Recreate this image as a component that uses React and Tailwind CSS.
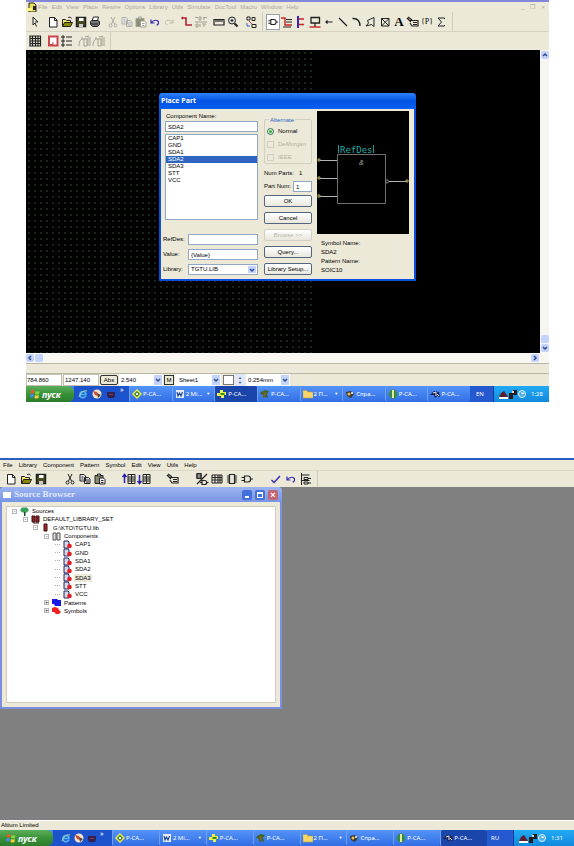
import React, { useState } from "react";

const parts = ["CAP1", "GND", "SDA1", "SDA2", "SDA3", "STT", "VCC"];

// Drawings shared by both toolbars, on a 14x14 grid
const drawings = {
  pointer: <path d="M5 2v8l2-2 1.5 3.5M5 2l5 5H7" />,
  file: <path d="M3.5 2.5h5l2.500 2.500v7h-7.500zM8.500 2.500v3h2.500" fill="#fff" />,
  open: (
    <>
      <path d="M2.500 11.500v-7h3l1 1h4v2" fill="#f3e66a" />
      <path d="M2.500 11.500l2-4h8l-2 4z" fill="#8a8a00" />
      <path d="M8 3c1-1.500 3-1 3.500.5" />
    </>
  ),
  save: (
    <>
      <path d="M2.500 2.500h9v9h-9z" fill="#4a4a20" strokeWidth="1.500" />
      <path d="M5 3h4.500v3H5z" fill="#fff" stroke="none" />
      <path d="M5 9h4v3H5z" fill="#ccc" stroke="none" />
    </>
  ),
  print: (
    <>
      <path d="M4 6l1.500-4h5L9.500 6" fill="#fff" />
      <path d="M2.500 6.500l1-1h6l2 1v3l-2 2h-5l-2-2z" fill="#777" />
      <path d="M3 9h7" />
    </>
  ),
  cut: (
    <>
      <path d="M5 2l3.500 7M9 2L5.500 9" />
      <circle cx="4.500" cy="10.500" r="1.500" />
      <circle cx="9.500" cy="10.500" r="1.500" />
    </>
  ),
  copy: (
    <path d="M2 2.500h4l1.500 1.500v5H2zM6.500 5.500h4L12 7v4.500H6.500zM3.500 5h2M3.500 7h2M8 8h3M8 10h3" fill="#e6e6ee" />
  ),
  paste: (
    <>
      <path d="M2 3.500h8v8H2z" fill="#8c8a70" />
      <path d="M4.500 2h3v2h-3z" fill="#ddd" />
      <path d="M6.500 6h4l1.500 1.500V12H6.500zM8 8.500h2.500M8 10.500h2.500" fill="#fff" />
    </>
  ),
  undo: <path d="M3 4.500v3.500h3.500M3.500 7.500c2-3 7-3 7 0 0 1.500-1 2.500-2 2.500" strokeWidth="1.200" />,
  redo: <path d="M11 4.500v3.500H7.500M10.500 7.500c-2-3-7-3-7 0 0 1.500 1 2.500 2 2.500" />,
  route: <path d="M2 3h4v7h6M3 2l-1 1 1 1" strokeWidth="1.600" />,
  script: <path d="M1 2.500h3M5 2v3h2V2zM9 2.500h4M10 5V2M1 7h12M2 9v3h2V9zM6 9v3M8 9h4M10 9v3" />,
  measure: <path d="M2 4.500h10v5.500H2zM4 5v2M6 5v2M8 5v2M10 5v2" strokeWidth="1.200" />,
  zoom: (
    <>
      <circle cx="6" cy="5.500" r="3.500" fill="#ddd" />
      <path d="M8.500 8.500l3 3" strokeWidth="2" />
      <path d="M4.500 5.500h3M6 4v3" />
    </>
  ),
  swap: (
    <>
      <path d="M3 2h3v3H3zM8 9.500h4v3H8zM8 2.500h3v3H8z" />
      <path d="M5 6l3 3" stroke="#c33" />
      <path d="M3 8v3h3" stroke="#36c" />
    </>
  ),
  gate: <path d="M1.500 5.500h3M1.500 8.500h3M4.500 4H8c3.500 0 3.500 6 0 6H4.500zM10.500 7H13" strokeWidth="1.200" />,
  wire: (
    <>
      <path d="M1 3h4v7h7" stroke="#c22" strokeWidth="1.400" />
      <path d="M6 4.500h6M6 7h6M3 12h8" />
    </>
  ),
  bus: (
    <>
      <path d="M4 1v12" stroke="#3a25b5" strokeWidth="2" />
      <path d="M5 4h5M5 9.500h5" stroke="#c22" strokeWidth="1.400" />
    </>
  ),
  port: (
    <>
      <path d="M3 2.500h8.500v5.500H3zM7 8v4" strokeWidth="1.300" />
      <path d="M1.500 12h11" stroke="#c22" strokeWidth="1.400" />
    </>
  ),
  pin: <path d="M4 7h6.500M5.500 5.500L4 7l1.500 1.500" strokeWidth="1.200" />,
  line: <path d="M3 3l8 8" strokeWidth="1.300" />,
  arc: <path d="M2.500 3.500C8 3 10 7 10 11" strokeWidth="1.400" />,
  polygon: <path d="M2 11l2.500-3L3.500 5.500 10 2.500v9L7.500 9.500z" />,
  field: <path d="M3.500 3.500h7.500v7.500H3.500zM3.500 3.500l7.500 7.500M11 3.500L3.500 11" />,
  rename: <path d="M1 3l4 4M2 2l4 3M4.500 5.500H12v5.500H6L4 8M7 7.500h4M7 9.500h4" strokeWidth="1.200" />,
  sigma: <path d="M10.500 4V3H4l3.500 4L4 11h6.500v-1" />,
  grid: <path d="M2 2h10.500v10H2zM2 4.500h10.500M2 7h10.500M2 9.500h10.500M4.500 2v10M7.500 2v10M10 2v10" strokeWidth="1.200" />,
  sheet: (
    <>
      <path d="M3 2.500h8.500v9H3z" fill="#fff" stroke="#cc454b" strokeWidth="2" />
      <path d="M4 10.500h3V8" stroke="#cc454b" />
    </>
  ),
  list: <path d="M2 2h2v2H2zM2 6h2v2H2zM2 10h2v2H2zM6 3h6M6 7h6M6 11h6" />,
  sort: <path d="M1 12c0-4 1-6 3-7M3 4h2v2M6 5h3v7H6zM10 3v9M12 3v9M7 3l4-1" />,
  up: (
    <>
      <path d="M2.500 11V3M.5 5l2-2.500 2 2.500" stroke="#2a1fae" strokeWidth="1.500" />
      <path d="M6 2.500h7v9H6zM9.500 2.500v9M6 5h7M6 7h7M6 9h7" />
    </>
  ),
  down: (
    <>
      <path d="M2.500 3v8M.5 9l2 2.500 2-2.500" stroke="#2a1fae" strokeWidth="1.500" />
      <path d="M6 2.500h7v9H6zM9.500 2.500v9M6 5h7M6 7h7M6 9h7" />
    </>
  ),
  both: <path d="M2 1.500h4v5H2zM1 3h6M1 5h6M2 12L12 2M7 8.500h2.500c3 0 3 4 0 4H7zM5 10.500h2M12 10.500h1.500" strokeWidth="1.200" />,
  table: <path d="M2 3h10v8H2zM5 3v8M8 3v8M10 3v8M2 5.500h10M2 8h10" />,
  chip: <path d="M4.500 2.500h5v9h-5zM2 4h2M2 6h2M2 8h2M2 10h2M10 4h2M10 6h2M10 8h2M10 10h2" strokeWidth="1.200" />,
  check: <path d="M2.500 8l2.500 2.500L11 4" strokeWidth="1.400" />,
  tree: <path d="M2.500 1v12M2.500 3h8M5 5.500h4v2H5zM5 10h4v2H5zM9 6.500h3M9 11h3M2.500 8.500h8" />,
};

function Icon({ name, color = "#222" }) {
  return (
    <svg viewBox="0 0 14 14" className="size-3.5" fill="none" stroke={color} aria-hidden="true">
      {drawings[name]}
    </svg>
  );
}

function Tool({ name, color, wide, active }) {
  return (
    <button
      type="button"
      aria-label={name}
      className={`flex h-4 shrink-0 items-center justify-center ${wide ? "w-[15px]" : "w-3.5"} ${
        active ? "border border-gray-400 bg-white" : ""
      }`}
    >
      {name === "text" && <span className="font-['Liberation_Serif',serif] text-[13px] font-bold">A</span>}
      {name === "parameter" && <span className="font-['Liberation_Serif',serif] text-[8px]">{"{P}"}</span>}
      {drawings[name] && <Icon name={name} color={color} />}
    </button>
  );
}

function ToolGroup({ children }) {
  return <div className="flex items-center">{children}</div>;
}

function MenuBar({ items, className }) {
  return (
    <nav className={`flex items-center ${className}`}>
      {items.map((item) => (
        <button key={item} type="button">
          {item}
        </button>
      ))}
    </nav>
  );
}

function Chevron({ className = "" }) {
  return (
    <svg viewBox="0 0 8 8" className={`size-2 ${className}`} fill="none" stroke="#30508c" strokeWidth="1.500" aria-hidden="true">
      <path d="M2 3l2 2 2-2" />
    </svg>
  );
}

function Combo({ label, value, className }) {
  return (
    <div className={`relative flex bg-white ${className}`}>
      <select aria-label={label} className="w-full appearance-none pl-0.5 outline-none">
        <option>{value}</option>
      </select>
      <span className="pointer-events-none absolute inset-y-px right-px flex w-2 items-center bg-[#c3d3fb]">
        <Chevron />
      </span>
    </div>
  );
}

function TaskIcon({ kind }) {
  return (
    <svg viewBox="0 0 10 10" className="size-2.5 shrink-0" aria-hidden="true">
      {kind === "diamond" && (
        <>
          <path d="M5 0l5 5-5 5-5-5z" fill="#f2f03c" />
          <path d="M5 2l3 3-3 3-3-3z" fill="#186b3a" />
          <circle cx="5" cy="5" r="1.300" fill="#fff" />
        </>
      )}
      {kind === "word" && (
        <>
          <path d="M1 1h8v8H1z" fill="#e8edf8" />
          <path d="M2 3l1 4 1.500-3L6 7l1.500-4" fill="none" stroke="#234a9c" strokeWidth="1.200" />
        </>
      )}
      {kind === "cross" && (
        <>
          <path d="M3 1h3v2h3v3H7v3H4V7H0V4h3z" fill="#eef244" />
          <path d="M3.500 4h4v2h-4z" fill="#2f8a30" />
        </>
      )}
      {kind === "brush" && (
        <>
          <path d="M1 3l4-2 4 1-2 3 1 4-3-1-2 1V6L0 5z" fill="#3d6728" />
          <path d="M3 3l4 1-3 5z" fill="#7b6030" />
        </>
      )}
      {kind === "folder" && <path d="M0 1.500h4l1 1.500h5v6H0z" fill="#f7d568" stroke="#c9982d" strokeWidth=".5" />}
      {kind === "help" && (
        <>
          <path d="M1 3l5-1 3 3-3 4-4-2z" fill="#42382a" />
          <circle cx="4" cy="5" r="1.500" fill="#e5c25c" />
          <circle cx="7" cy="4" r="1" fill="#fff" />
        </>
      )}
      {kind === "library" && (
        <>
          <ellipse cx="5" cy="5" rx="4" ry="4.500" fill="#3a8b3d" />
          <path d="M4 1h2v8H4z" fill="#e3e9a8" />
        </>
      )}
      {kind === "tools" && (
        <>
          <path d="M0 6l4-4 5 1 1 5-3-1-2 2-1-3z" fill="#1b2354" />
          <path d="M3 4l3-1v4M7 5l2 2" stroke="#e8e8ee" fill="none" />
        </>
      )}
    </svg>
  );
}

const tasks = [
  { icon: "diamond", title: "P-CA..." },
  { icon: "word", title: "2 Mi...", group: true },
  { icon: "cross", title: "P-CA..." },
  { icon: "brush", title: "P-CA..." },
  { icon: "folder", title: "2 П...", group: true },
  { icon: "help", title: "Спра..." },
  { icon: "library", title: "P-CA..." },
  { icon: "tools", title: "P-CA..." },
];

function Taskbar({ active, language, time, wide }) {
  return (
    <footer className="flex h-4 items-stretch overflow-hidden bg-linear-to-b from-[#4b8bf5] via-[#2560df] to-[#1e50c4] font-['Noto_Sans',sans-serif] text-[6px] text-white">
      <button
        type="button"
        className={`flex items-center gap-0.5 rounded-r-md bg-linear-to-b from-[#5cae5a] via-[#389238] to-[#2d7c2c] text-[9px] leading-none font-bold italic ${
          wide ? "w-[53px] pl-1.5" : "w-12 pl-1"
        }`}
      >
        <svg viewBox="0 0 10 10" className="size-2.5" aria-hidden="true">
          <path d="M1 1.500q2-1 3.500 0L4 4.500Q2.500 3.500.5 4.500z" fill="#f0552b" />
          <path d="M5.500 2q2 1 4 0L9 5q-2 1-4 0z" fill="#8ad23d" />
          <path d="M.5 5.500q2-1 3.500 0l-.5 3q-2-1-3.500 0z" fill="#4a8bf0" />
          <path d="M5 6q2 1 4 0l-.5 3q-2 1-4 0z" fill="#f7d03b" />
        </svg>
        пуск
      </button>
      <div className={`flex items-center bg-[#1c52cb] ${wide ? "w-[59px] gap-[3px] pl-2" : "w-[55px] gap-1 pl-1"}`}>
        <svg viewBox="0 0 10 10" className="size-2.5" fill="none" aria-hidden="true">
          <path d="M2 5.500h6C8 1.500 2 1.500 2 5.500s4 4 6 1.500" stroke="#51b7f2" strokeWidth="1.500" />
          <path d="M1 8C2 4 6 1 9 2" stroke="#b0d8ae" />
        </svg>
        <svg viewBox="0 0 10 10" className="size-2.5" aria-hidden="true">
          <circle cx="5" cy="5" r="4.500" fill="#efe3c8" />
          <path d="M1 2l4 1 1 4-3-1z" fill="#cf4936" />
          <path d="M5 4l4 2-3 3z" fill="#584637" />
        </svg>
        <svg viewBox="0 0 10 10" className="size-2.5" aria-hidden="true">
          <path d="M1 3h8v3L8 9H2L1 6z" fill="#33204f" />
          <path d="M3 5h4v1H3z" fill="#8a3552" />
        </svg>
        <button type="button" aria-label="More" className="self-start text-[7px] leading-none">
          »
        </button>
      </div>
      <div className="flex min-w-0 flex-1">
        {tasks.map((task, i) => (
          <button
            key={i}
            type="button"
            className={`flex min-w-0 flex-1 items-center gap-px rounded-xs border-l border-[#6ea2f8] pl-0.5 whitespace-nowrap ${
              i === active ? "bg-[#1a46ab]" : "bg-linear-to-b from-[#5493f8] to-[#326ee5]"
            }`}
          >
            <TaskIcon kind={task.icon} />
            {task.title}
            {task.group && <span className="mr-1 ml-auto text-[4px]">▼</span>}
          </button>
        ))}
      </div>
      <div className={`flex items-center bg-[#2459cf] ${wide ? "w-[26px] pl-1" : "w-[23px] pl-1.5"}`}>{language}</div>
      <div className={`flex items-center gap-px border-l border-[#0d3f9a] bg-linear-to-b from-[#22aaf4] to-[#1289dd] pl-1 ${wide ? "w-[61px]" : "w-14"}`}>
        <svg viewBox="0 0 28 10" className="mr-1 h-2.5 w-7" aria-hidden="true">
          <path d="M1 8l2-4 3-2 2 3 2 3z" fill="#5c1f31" />
          <path d="M1 8h9v2H1z" fill="#fff" />
          <path d="M11 4h4V1h4v5h-4v4h-4z" fill="#231d1d" />
          <path d="M14 2h2v2h-2z" fill="#e2d9d9" />
          <circle cx="24" cy="5" r="3.500" fill="#4caee8" stroke="#dcf3fc" />
          <path d="M24 3v2l2-1" stroke="#fff" fill="none" />
        </svg>
        {time}
      </div>
    </footer>
  );
}

function DialogButton({ children, disabled }) {
  return (
    <button
      type="button"
      disabled={disabled}
      className="h-3 w-12 rounded-xs border border-[#52677f] bg-linear-to-b from-white to-[#e9e7dd] leading-none whitespace-nowrap disabled:border-[#d2d0c4] disabled:text-[#b5b3a6]"
    >
      {children}
    </button>
  );
}

function PartPreview() {
  return (
    <svg viewBox="0 0 92 123" className="h-[123px] w-[92px] bg-black" fill="none" aria-label="Part preview">
      <path d="M20.500 43.500h48v49h-48z" stroke="#707070" />
      <path d="M3 49.500h17M3 67.500h17M3 85.500h17M72 70.500h17" stroke="#b5b5b5" />
      <path d="M1 48h2v2H1zM1 66h2v2H1zM1 84h2v2H1zM89 69h2v2h-2z" stroke="#b8ac60" />
      <circle cx="70" cy="70.500" r="1.500" stroke="#888" />
      <path d="M21.500 34v8M56.500 34v8" stroke="#209b98" />
      <text x="23" y="42" fill="#24aaa6" fontSize="9" fontFamily="DejaVu Sans Mono, monospace">
        RefDes
      </text>
      <text x="42" y="54" fill="#aaa" fontSize="7" fontStyle="italic" fontFamily="Liberation Sans, sans-serif">
        &amp;
      </text>
    </svg>
  );
}

function PlacePartDialog() {
  const [selected, setSelected] = useState("SDA2");
  const field = "h-[11px] min-w-0 border border-[#90a8c4] bg-white px-0.5 outline-none";

  return (
    <section
      role="dialog"
      aria-label="Place Part"
      className="absolute top-[43px] left-[133px] w-[257px] rounded-t border-2 border-t-0 border-[#0b4fe0] bg-[#ece9d8]"
    >
      <h2 className="-mx-0.5 flex h-4 items-center rounded-t bg-linear-to-b from-[#2b83f8] via-[#0453e3] to-[#0560f2] pl-0.5 font-['Open_Sans',sans-serif] text-[7px] font-bold text-white">
        Place Part
      </h2>
      <div className="flex gap-1.5 px-0.5 pt-0.5">
        <div className="w-[95px]">
          <label htmlFor="component" className="ml-0.5 block h-2.5 pl-px leading-[10px]">
            Component Name:
          </label>
          <input
            id="component"
            value={selected}
            onChange={(e) => setSelected(e.target.value)}
            className={`${field} ml-0.5 w-[93px]`}
          />
          <ul className="mt-0.5 ml-0.5 h-[86px] border border-[#90a8c4] bg-white">
            {parts.map((part) => (
              <li key={part}>
                <button
                  type="button"
                  onClick={() => setSelected(part)}
                  className={`block h-[7px] w-full pl-0.5 text-left leading-[7px] ${
                    part === selected ? "bg-[#2f65c0] text-white" : ""
                  }`}
                >
                  {part}
                </button>
              </li>
            ))}
          </ul>
          <div className="mt-3.5 flex flex-col gap-1 pb-1">
            <div className="flex items-center">
              <label htmlFor="refdes" className="w-[25px]">
                RefDes:
              </label>
              <input id="refdes" defaultValue="" className={`${field} flex-1`} />
            </div>
            <div className="flex items-center">
              <label htmlFor="value" className="w-[25px]">
                Value:
              </label>
              <input id="value" defaultValue="{Value}" className={`${field} flex-1`} />
            </div>
            <div className="flex items-center">
              <span className="w-[25px]">Library:</span>
              <Combo label="Library" value="TGTU.LIB" className="h-[11px] flex-1 border border-[#90a8c4]" />
            </div>
          </div>
        </div>

        <div className="flex w-12 flex-col pt-2">
          <fieldset className="relative flex h-[45px] flex-col gap-1 rounded-xs border border-[#d0d0bf] pt-[7px] pl-0.5">
            <legend className="absolute -top-1 left-1 bg-[#ece9d8] px-px leading-2 text-[#2464c8]">Alternate</legend>
            {["Normal", "DeMorgan", "IEEE"].map((name, i) => (
              <label key={name} className={`flex h-[9px] items-center gap-1 ${i > 0 ? "text-[#b5b3a6]" : ""}`}>
                <input
                  type="radio"
                  name="alternate"
                  defaultChecked={i === 0}
                  disabled={i > 0}
                  className="size-[7px] appearance-none rounded-full border border-[#457c68] bg-white checked:bg-[#36a838] checked:shadow-[inset_0_0_0_1px_white] disabled:rounded-none disabled:border-[#d2d0c4] disabled:bg-transparent"
                />
                {name}
              </label>
            ))}
          </fieldset>
          <p className="mt-1 flex h-2.5 items-center whitespace-pre">Num Parts:   1</p>
          <div className="my-[3px] flex items-center justify-between">
            <label htmlFor="partnum" className="whitespace-nowrap">
              Part Num:
            </label>
            <input id="partnum" defaultValue="1" className={`${field} w-[19px]`} />
          </div>
          <div className="flex flex-col gap-[5px]">
            <DialogButton>OK</DialogButton>
            <DialogButton>Cancel</DialogButton>
            <DialogButton disabled>Browse &gt;&gt;</DialogButton>
            <DialogButton>Query...</DialogButton>
            <DialogButton>Library Setup...</DialogButton>
          </div>
        </div>

        <div className="-ml-px">
          <PartPreview />
          <dl className="mt-[5px] pl-1 leading-[9px]">
            <dt>Symbol Name:</dt>
            <dd>SDA2</dd>
            <dt>Pattern Name:</dt>
            <dd>SOIC10</dd>
          </dl>
        </div>
      </div>
    </section>
  );
}

function ScrollButton({ className = "" }) {
  return (
    <button type="button" aria-label="Scroll" className="flex size-2 items-center justify-center rounded-xs bg-[#c3d3fb]">
      <Chevron className={className} />
    </button>
  );
}

function SchematicWindow() {
  return (
    <section className="ml-[26px] mr-[25px] border-t-2 border-[#8286d8] bg-[#ece9d8]">
      <header className="flex h-2.5 items-center text-[#aaa89a]">
        <svg viewBox="0 0 10 10" className="mr-px ml-px size-2.5" aria-hidden="true">
          <path d="M2 1h5l2 2v7H2z" fill="#e8df55" stroke="#222" />
          <path d="M0 6h5v3H0z" fill="#fff37a" />
          <path d="M6 4h3v4H6z" fill="#222" />
        </svg>
        <MenuBar
          className="gap-1"
          items={["File", "Edit", "View", "Place", "Rewire", "Options", "Library", "Utils", "Simulate", "DocTool", "Macro", "Window", "Help"]}
        />
        <div className="mr-1 ml-auto flex gap-1.5">
          <button type="button" aria-label="Minimize">_</button>
          <button type="button" aria-label="Restore">❐</button>
          <button type="button" aria-label="Close">×</button>
        </div>
      </header>

      <div className="flex h-5 items-center border-b border-[#d4d1c0] pl-0.5">
        <div className="flex items-center gap-1">
          <Tool name="pointer" />
          <ToolGroup>
            <Tool name="file" />
            <Tool name="open" />
            <Tool name="save" />
            <Tool name="print" />
          </ToolGroup>
          <ToolGroup>
            <Tool name="cut" color="#b0aea2" />
            <Tool name="copy" color="#b0aea2" />
            <Tool name="paste" color="#a3a195" />
            <Tool name="undo" color="#3029b4" />
            <Tool name="redo" color="#bbb9ad" />
          </ToolGroup>
          <ToolGroup>
            <Tool name="route" color="#b02538" />
            <Tool name="script" color="#a3a195" />
          </ToolGroup>
          <ToolGroup>
            <Tool name="measure" />
            <Tool name="zoom" />
          </ToolGroup>
          <Tool name="swap" />
        </div>
        <div className="ml-1 flex h-full items-center border-x border-[#cfccbb] pr-1 pl-[3px]">
          <Tool name="gate" active />
          <Tool name="wire" />
          <Tool name="bus" />
          <Tool name="port" />
          <Tool name="pin" />
          <Tool name="line" />
          <Tool name="arc" />
          <Tool name="polygon" />
          <Tool name="field" />
          <Tool name="text" />
          <Tool name="rename" />
          <Tool name="parameter" />
          <Tool name="sigma" />
        </div>
      </div>
      <div className="flex h-[18px] items-center pl-0.5">
        <div className="flex h-full items-center gap-1 border-r border-[#cfccbb] pr-1">
          <Tool name="grid" />
          <ToolGroup>
            <Tool name="sheet" />
            <Tool name="list" />
          </ToolGroup>
          <ToolGroup>
            <Tool name="sort" color="#a3a195" />
            <Tool name="sort" color="#a3a195" />
          </ToolGroup>
        </div>
      </div>

      <div className="flex h-[303px]">
        <div className="relative flex-1 bg-black">
          <div className="h-full w-[290px] bg-[radial-gradient(circle_at_3px_3px,#16261d_1px,transparent_1px)] bg-size-[6px_6px]" />
          <PlacePartDialog />
        </div>
        <div className="flex w-[9px] flex-col items-center justify-between bg-[#f6f5f0] py-px">
          <ScrollButton className="rotate-180" />
          <div className="flex flex-col gap-px">
            <div className="size-2 rounded-xs bg-[#c3d3fb]" />
            <ScrollButton />
          </div>
        </div>
      </div>
      <div className="flex h-2.5 items-center bg-[#f8f7f2] pr-2.5">
        <ScrollButton className="rotate-90" />
        <div className="ml-px h-2 w-2 rounded-xs bg-[#c3d3fb]" />
        <div className="ml-auto">
          <ScrollButton className="-rotate-90" />
        </div>
      </div>
      <div className="h-[11px] border-y border-[#b9b6a5]" />
      <div className="flex h-3 items-stretch gap-px">
        <output className="flex w-9 items-center border border-[#c4c1b0] bg-white">784.860</output>
        <output className="flex w-9 items-center border border-[#c4c1b0] bg-white pl-px">1247.140</output>
        <button type="button" className="my-px w-[18px] rounded-xs border border-[#333] leading-none">Abs</button>
        <Combo label="Grid" value="2.540" className="w-11" />
        <button type="button" className="my-px w-2.5 border border-[#333] leading-none">M</button>
        <Combo label="Sheet" value="Sheet1" className="w-[46px] pl-0.5" />
        <input aria-label="Layer" className="my-px ml-px w-[11px] border border-[#777] bg-white" />
        <div className="flex w-2.5 flex-col items-center justify-center bg-[#e0e7fa] text-[4px] leading-[5px] text-[#30508c]">
          <button type="button">▲</button>
          <button type="button">▼</button>
        </div>
        <Combo label="Line width" value="0.254mm" className="w-11" />
      </div>
      <Taskbar active={2} language="EN" time="1:28" />
    </section>
  );
}

function TreeIcon({ kind }) {
  return (
    <svg viewBox="0 0 9 9" className="size-[9px] shrink-0" aria-hidden="true">
      {kind === "sources" && (
        <>
          <path d="M0 3l2-2.500h5L9 3 7 5.500H2z" fill="#35a259" />
          <path d="M4 5h1.500v4H4z" fill="#174b29" />
        </>
      )}
      {kind === "set" && <path d="M1 1h3v6H1zM5 1h3v6H5zM2 8h6" fill="#8a2222" stroke="#401010" />}
      {kind === "lib" && <path d="M3 1h3v7H3z" fill="#a92a2a" stroke="#351010" />}
      {kind === "components" && <path d="M1 1h3v7H1zM5 1h3v7H5z" fill="#e4e4e4" stroke="#555" />}
      {kind === "part" && (
        <>
          <path d="M1 1h4l1 1v6H1z" fill="#d7d7e6" stroke="#222760" />
          <circle cx="6.500" cy="6" r="2.300" fill="#e01b22" />
        </>
      )}
      {kind === "patterns" && <path d="M0 1h5l1 1h3v6H3L2 6H0z" fill="#1717e8" />}
      {kind === "symbols" && <path d="M0 2l3-1 3 1 1 2 2 2-2 2H4L2 6H0z" fill="#ef2020" />}
    </svg>
  );
}

function TreeRow({ kind, label, className, toggle, selected }) {
  return (
    <li className={`flex min-h-0 items-center gap-0.5 ${className}`}>
      {toggle ? (
        <button type="button" aria-label={`Toggle ${label}`} className="mr-px flex size-[5px] items-center justify-center border border-[#b5b5b5] text-[5px] leading-none">
          {toggle}
        </button>
      ) : (
        <span className="mr-px w-[5px] border-t border-dotted border-[#aaa]" />
      )}
      <TreeIcon kind={kind} />
      <span className={`px-px leading-2 ${selected ? "bg-[#ece9d8]" : ""}`}>{label}</span>
    </li>
  );
}

function SourceBrowser() {
  return (
    <section className="absolute top-0 left-0 w-[282px] rounded-t border-2 border-t-0 border-[#7b8ee0] bg-[#ece9d8]">
      <header className="-mx-0.5 flex h-[15px] items-center rounded-t bg-linear-to-b from-[#9db4f0] to-[#7895e6] pr-1 pl-[3px]">
        <span className="h-1.5 w-2 bg-white" />
        <h2 className="ml-[3px] font-['Liberation_Serif',serif] text-[9px] font-bold text-[#dfe7fc]">Source Browser</h2>
        <div className="ml-auto flex gap-[3px] text-[9px] leading-none font-bold text-white">
          <button type="button" aria-label="Minimize" className="flex size-2.5 items-end justify-center rounded-xs bg-[#4470dc] pb-0.5">
            <span className="h-0.5 w-1 bg-white" />
          </button>
          <button type="button" aria-label="Maximize" className="flex size-2.5 items-center justify-center rounded-xs bg-[#4470dc]">
            <span className="size-1.5 border border-t-2 border-white" />
          </button>
          <button type="button" aria-label="Close" className="size-2.5 rounded-xs bg-[#c26572] leading-[10px]">
            ×
          </button>
        </div>
      </header>
      <div className="p-1">
        <div className="h-[197px] border border-[#d0cdbd] bg-white">
          <ul className="grid h-[108px] auto-rows-fr">
            <TreeRow kind="sources" label="Sources" toggle="-" className="pl-[5px]" />
            <TreeRow kind="set" label="DEFAULT_LIBRARY_SET" toggle="-" className="pl-4" />
            <TreeRow kind="lib" label="G:\KTO\TGTU.lib" toggle="-" className="pl-[26px]" />
            <TreeRow kind="components" label="Components" toggle="-" className="pl-[37px]" />
            {parts.map((part) => (
              <TreeRow key={part} kind="part" label={part} selected={part === "SDA3"} className="pl-12" />
            ))}
            <TreeRow kind="patterns" label="Patterns" toggle="+" className="pl-[37px]" />
            <TreeRow kind="symbols" label="Symbols" toggle="+" className="pl-[37px]" />
          </ul>
        </div>
      </div>
    </section>
  );
}

function LibraryWindow() {
  return (
    <section className="mt-14 border-t-2 border-[#2a5fc0] bg-[#ece9d8]">
      <MenuBar
        className="h-2.5 gap-1.5 pl-[3px]"
        items={["File", "Library", "Component", "Pattern", "Symbol", "Edit", "View", "Utils", "Help"]}
      />
      <div className="flex h-[17px] items-center border-t border-[#dbd8c8]">
        <div className="flex h-full items-center gap-3.5 border-r border-[#cfccbb] pr-1 pl-[3px]">
          <ToolGroup>
            <Tool wide name="file" />
            <Tool wide name="open" />
            <Tool wide name="save" />
          </ToolGroup>
          <ToolGroup>
            <Tool wide name="cut" />
            <Tool wide name="copy" />
            <Tool wide name="paste" />
          </ToolGroup>
          <ToolGroup>
            <Tool wide name="up" />
            <Tool wide name="down" />
          </ToolGroup>
          <Tool wide name="rename" />
          <ToolGroup>
            <Tool wide name="both" />
            <Tool wide name="table" />
            <Tool wide name="chip" />
            <Tool wide name="gate" />
          </ToolGroup>
          <ToolGroup>
            <Tool wide name="check" color="#3029b4" />
            <Tool wide name="undo" color="#3029b4" />
            <Tool wide name="tree" />
          </ToolGroup>
        </div>
      </div>
      <div className="relative h-[333px] bg-[#808080]">
        <SourceBrowser />
      </div>
      <p className="flex h-2.5 items-center border-t border-white pl-px">Altium Limited</p>
      <Taskbar active={7} language="RU" time="1:31" wide />
    </section>
  );
}

export default function App() {
  return (
    <main className="bg-white font-['Liberation_Sans',Arial,sans-serif] text-[6px] leading-normal text-black">
      <SchematicWindow />
      <LibraryWindow />
    </main>
  );
}
